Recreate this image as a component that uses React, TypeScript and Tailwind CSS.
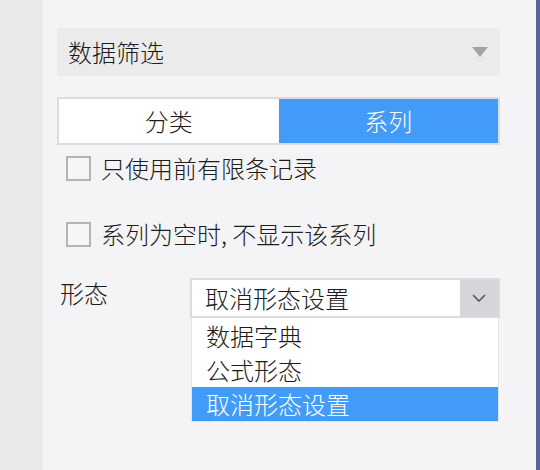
import React from "react";

const font = "font-['Noto_Sans_CJK_SC','Noto_Sans',sans-serif] font-light";

function Checkbox({ label }: { label: string }) {
  return (
    <div className="flex h-[34px] items-center pl-[9px]">
      <div className="h-[25px] w-[25px] border-2 border-[#b4b4b4] bg-[#f6f6f8]" />
      <span className="ml-[10px] text-[24px] leading-none text-[#1c1c1c]">{label}</span>
    </div>
  );
}

export default function App() {
  return (
    <div className={`flex h-[470px] w-[540px] ${font}`}>
      <div className="w-[43px] bg-[#e9e9eb]" />
      <div className="flex-1 bg-[#f4f4f6] pl-[14px] pr-[36px] pt-[28px]">
        <div className="flex h-[48px] items-center justify-between bg-[#ebebeb] pl-[11px] pr-[12px]">
          <span className="text-[24px] leading-none text-[#1c1c1c]">数据筛选</span>
          <svg width="16" height="10" viewBox="0 0 16 10">
            <polygon points="0,0 16,0 8,10" fill="#a3a3a3" />
          </svg>
        </div>
        <div className="mt-[21px] flex h-[48px] border-2 border-[#dcdcdc] bg-white">
          <div className="flex flex-1 items-center justify-center text-[24px] text-[#1c1c1c]">分类</div>
          <div className="flex flex-1 items-center justify-center bg-[#429bf7] text-[24px] text-white">系列</div>
        </div>
        <div className="mt-[6px]">
          <Checkbox label="只使用前有限条记录" />
        </div>
        <div className="mt-[32px]">
          <Checkbox label="系列为空时, 不显示该系列" />
        </div>
        <div className="mt-[27px] flex items-start">
          <div className="ml-[3px] h-[30px] w-[130px] text-[24px] leading-[30px] text-[#1c1c1c]">形态</div>
          <div className="w-[310px]">
            <div className="flex h-[40px] border-2 border-[#dcdcdc] bg-white">
              <div className="flex flex-1 items-center pl-[13px] text-[24px] text-[#1c1c1c]">取消形态设置</div>
              <div className="flex w-[38px] items-center justify-center bg-[#d6d6da]">
                <svg width="14" height="8" viewBox="0 0 14 8">
                  <polyline points="1,1 7,7 13,1" fill="none" stroke="#555" strokeWidth="1.6" />
                </svg>
              </div>
            </div>
            <div className="ml-[1px] w-[308px] border border-t-0 border-[#e4e4e4] bg-white pt-[1px]">
              <div className="flex h-[34px] items-center pl-[14px] text-[24px] text-[#1c1c1c]">数据字典</div>
              <div className="flex h-[34px] items-center pl-[14px] text-[24px] text-[#1c1c1c]">公式形态</div>
              <div className="flex h-[34px] items-center bg-[#429bf7] pl-[14px] text-[24px] text-white">取消形态设置</div>
            </div>
          </div>
        </div>
      </div>
      <div className="w-[4px] bg-[#5b6593]" />
    </div>
  );
}
